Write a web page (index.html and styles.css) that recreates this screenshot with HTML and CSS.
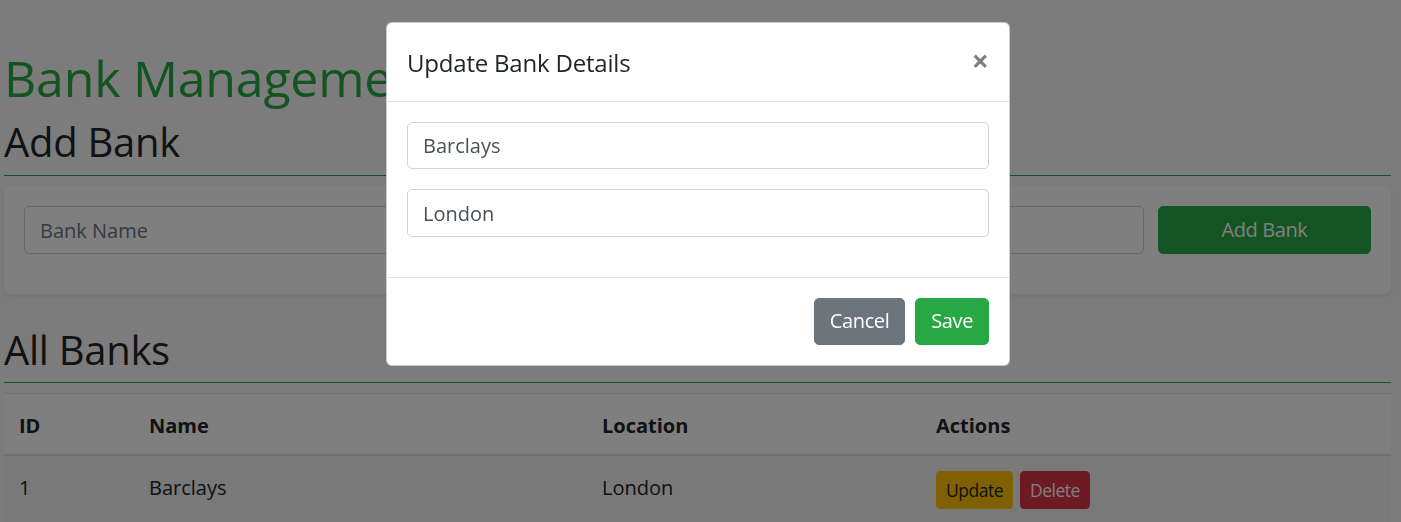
FILE: index.html
```html
<!DOCTYPE html>
<html lang="en">
<head>
<meta charset="utf-8">
<title>Bank Management System</title>
<link rel="stylesheet" href="styles.css">
</head>
<body>
<div class="page">
  <h1 class="title">Bank Management System</h1>

  <h2 class="section-title first">Add Bank</h2>
  <div class="card">
    <form class="add-form">
      <input class="form-control" type="text" placeholder="Bank Name">
      <input class="form-control" type="text" placeholder="Location">
      <button type="button" class="btn btn-success btn-block">Add Bank</button>
    </form>
  </div>

  <h2 class="section-title">All Banks</h2>
  <table class="table">
    <thead>
      <tr>
        <th class="col-id">ID</th>
        <th class="col-name">Name</th>
        <th class="col-loc">Location</th>
        <th>Actions</th>
      </tr>
    </thead>
    <tbody>
      <tr class="odd">
        <td>1</td>
        <td>Barclays</td>
        <td>London</td>
        <td class="cell-actions"><div class="actions"><button class="btn-sm btn-warning">Update</button><button class="btn-sm btn-danger">Delete</button></div></td>
      </tr>
    </tbody>
  </table>
</div>

<div class="backdrop"></div>
<div class="modal">
  <div class="modal-dialog">
    <div class="modal-content">
      <div class="modal-header">
        <h5 class="modal-title">Update Bank Details</h5>
        <button type="button" class="close">&times;</button>
      </div>
      <div class="modal-body">
        <input class="form-control" type="text" value="Barclays">
        <input class="form-control" type="text" value="London">
      </div>
      <div class="modal-footer">
        <button type="button" class="btn btn-secondary">Cancel</button>
        <button type="button" class="btn btn-success">Save</button>
      </div>
    </div>
  </div>
</div>
</body>
</html>
```

FILE: styles.css
```css
* { box-sizing: border-box; }

html, body {
  margin: 0;
  padding: 0;
}

body {
  background: #f8f9fa;
  color: #212529;
  font-family: "Open Sans", "Noto Sans", sans-serif;
  font-size: 20px;
  line-height: 1.5;
  overflow: hidden;
  height: 522px;
}

.page {
  padding: 48px 10px 0 4px;
}

.title {
  margin: 0 0 8px 0;
  color: #28a745;
  font-size: 50px;
  font-weight: 500;
  line-height: 1.2;
  letter-spacing: -0.2px;
}

.section-title {
  margin: 0 0 10px 0;
  padding-top: 2px;
  padding-bottom: 8px;
  font-size: 40px;
  font-weight: 500;
  line-height: 1.2;
  letter-spacing: -0.3px;
  border-bottom: 1px solid #28a745;
}

.section-title.first {
  padding-bottom: 9px;
}

.card {
  background: #fff;
  border-radius: 6px;
  box-shadow: 0 2px 5px rgba(0, 0, 0, 0.08);
  padding: 20px;
  margin-bottom: 30px;
}

.add-form {
  display: grid;
  grid-template-columns: 1fr 1fr 213px;
  column-gap: 14px;
  margin-bottom: 20px;
}

.form-control {
  display: block;
  width: 100%;
  height: 47.5px;
  padding: 8px 15px 7px;
  font-family: inherit;
  font-size: 20px;
  line-height: 1.5;
  color: #495057;
  background: #fff;
  border: 1px solid #ced4da;
  border-radius: 5px;
  outline: none;
}

.form-control::placeholder {
  color: #6c757d;
}

.btn {
  display: inline-block;
  height: 47.5px;
  padding: 7.5px 15px;
  font-family: inherit;
  font-size: 20px;
  line-height: 1.5;
  font-weight: 400;
  letter-spacing: -0.4px;
  color: #fff;
  border: 1px solid transparent;
  border-radius: 5px;
  cursor: pointer;
}

.btn-block {
  width: 100%;
}

.btn-success {
  background: #28a745;
  border-color: #28a745;
}

.btn-secondary {
  background: #6c757d;
  border-color: #6c757d;
}

.table {
  width: 100%;
  border-collapse: collapse;
  background: #fff;
  margin: 0;
}

.table th,
.table td {
  padding: 17px 15px 13px;
  text-align: left;
  vertical-align: top;
  border-top: 1px solid #dee2e6;
}

.table th {
  font-weight: 700;
  vertical-align: top;
  border-bottom: 2px solid #dee2e6;
}

.col-id { width: 130px; }
.col-name { width: 453px; }
.col-loc { width: 334px; }

.table tr.odd td {
  background: rgba(0, 0, 0, 0.05);
}

.table td.cell-actions {
  padding-top: 15px;
}

.actions {
  display: flex;
  gap: 7px;
}

.btn-sm {
  height: 38px;
  padding: 5px 9px;
  font-family: inherit;
  font-size: 17.5px;
  line-height: 1.5;
  letter-spacing: -0.5px;
  border: 1px solid transparent;
  border-radius: 4px;
}

.btn-warning {
  background: #ffc107;
  border-color: #ffc107;
  color: #212529;
}

.btn-danger {
  background: #dc3545;
  border-color: #dc3545;
  color: #fff;
}

.backdrop {
  position: fixed;
  inset: 0;
  background: rgba(0, 0, 0, 0.5);
}

.modal {
  position: fixed;
  inset: 0;
  padding-right: 5px;
}

.modal-dialog {
  width: 624px;
  margin: 22px auto 0;
}

.modal-content {
  background: #fff;
  border: 1px solid rgba(0, 0, 0, 0.2);
  border-radius: 6px;
}

.modal-header {
  display: flex;
  align-items: flex-start;
  justify-content: space-between;
  padding: 20px;
  border-bottom: 1px solid #dee2e6;
}

.modal-title {
  margin: 0;
  padding-top: 1px;
  height: 37.5px;
  font-size: 24px;
  font-weight: 500;
  line-height: 37.5px;
  letter-spacing: -0.2px;
}

.close {
  margin: -17px -20px -20px auto;
  padding: 20px;
  background: transparent;
  border: 0;
  font-family: inherit;
  font-size: 30px;
  font-weight: 700;
  line-height: 1;
  color: #000;
  opacity: 0.5;
  text-shadow: 0 1px 0 #fff;
}

.modal-body {
  padding: 20px;
}

.modal-body .form-control {
  margin-bottom: 20px;
}

.modal-footer {
  display: flex;
  justify-content: flex-end;
  align-items: center;
  padding: 15px;
  border-top: 1px solid #dee2e6;
}

.modal-footer .btn {
  margin: 5px;
}
```
